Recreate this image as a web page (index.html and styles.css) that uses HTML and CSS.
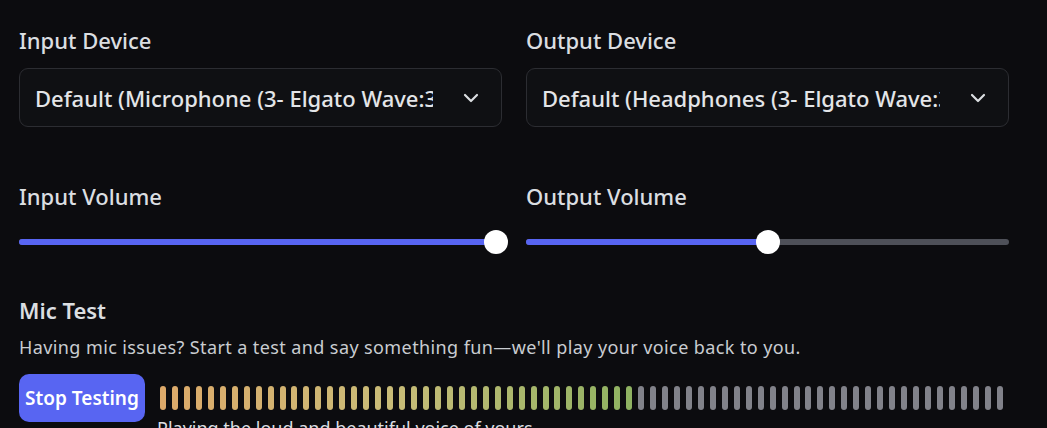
FILE: index.html
```html
<!DOCTYPE html>
<html lang="en">
<head>
    <meta charset="UTF-8">
    <title>Voice Settings</title>
    <link rel="stylesheet" href="styles.css">
</head>
<body>

<div class="settings">
    <div class="row">
        <div class="field">
            <h3 class="label">Input Device</h3>
            <div class="select">
                <span class="select-value">Default (Microphone (3- Elgato Wave:3))</span>
                <svg class="chevron" width="16" height="10" viewBox="0 0 16 10"><path d="M2 2l6 6 6-6" fill="none" stroke="#dbdee1" stroke-width="2.2" stroke-linecap="round" stroke-linejoin="round"/></svg>
            </div>
        </div>
        <div class="field">
            <h3 class="label">Output Device</h3>
            <div class="select">
                <span class="select-value">Default (Headphones (3- Elgato Wave:3))</span>
                <svg class="chevron" width="16" height="10" viewBox="0 0 16 10"><path d="M2 2l6 6 6-6" fill="none" stroke="#dbdee1" stroke-width="2.2" stroke-linecap="round" stroke-linejoin="round"/></svg>
            </div>
        </div>
    </div>

    <div class="row volumes">
        <div class="field">
            <h3 class="label">Input Volume</h3>
            <div class="slider">
                <div class="track"><div class="fill" style="width: 98.8%"></div></div>
                <div class="knob" style="left: 98.8%"></div>
            </div>
        </div>
        <div class="field">
            <h3 class="label">Output Volume</h3>
            <div class="slider">
                <div class="track"><div class="fill" style="width: 50.2%"></div></div>
                <div class="knob" style="left: 50.2%"></div>
            </div>
        </div>
    </div>

    <h3 class="label mic-title">Mic Test</h3>
    <p class="hint">Having mic issues? Start a test and say something fun—we'll play your voice back to you.</p>

    <div class="mic-test">
        <button class="btn">Stop Testing</button>
        <div class="meter">
            <div class="bars" id="bars"></div>
            <div class="meter-note">Playing the loud and beautiful voice of yours</div>
        </div>
    </div>
</div>

<script>
    // 71 bars, the first 40 lit, orange -> yellow -> green
    const bars = document.getElementById('bars');
    const total = 71;
    const lit = 40;
    const stops = [[221, 170, 106], [200, 188, 120], [143, 178, 98]];

    function mix(a, b, t) {
        return a.map((v, i) => Math.round(v + (b[i] - v) * t));
    }

    for (let i = 0; i < total; i++) {
        const bar = document.createElement('span');
        bar.className = 'bar';
        if (i < lit) {
            const t = i / (lit - 1);
            const c = t < 0.5 ? mix(stops[0], stops[1], t * 2) : mix(stops[1], stops[2], (t - 0.5) * 2);
            bar.style.background = `rgb(${c.join(',')})`;
        }
        bars.appendChild(bar);
    }
</script>

</body>
</html>
```

FILE: styles.css
```css
body {
    margin: 0;
    background: #0c0c0f;
    font-family: "Noto Sans", "Open Sans", sans-serif;
    color: #dbdee1;
    overflow: hidden;
}
.settings {
    width: 988px;
    padding: 26px 0 0 19px;
}
.row {
    display: grid;
    grid-template-columns: 483px 483px;
    column-gap: 24px;
}
.volumes {
    margin-top: 55px;
}
.label {
    margin: 0;
    font-size: 22px;
    line-height: 28px;
    font-weight: 500;
    color: #dbdee1;
}
.select {
    margin-top: 14px;
    height: 57px;
    box-sizing: content-box;
    border: 1px solid #2c2d32;
    border-radius: 9px;
    background: #0f1013;
    display: flex;
    align-items: center;
    padding: 0 22px 0 15px;
}
.select-value {
    flex: 1;
    min-width: 0;
    overflow: hidden;
    white-space: nowrap;
    font-size: 22px;
    font-weight: 500;
    color: #e3e5e8;
    margin-right: 30px;
}
.chevron {
    flex: none;
}
.slider {
    position: relative;
    margin-top: 20px;
    height: 24px;
    display: flex;
    align-items: center;
}
.track {
    width: 100%;
    height: 6px;
    border-radius: 3px;
    background: #4e5058;
    overflow: hidden;
}
.fill {
    height: 100%;
    background: #5865f2;
}
.knob {
    position: absolute;
    top: 0;
    width: 24px;
    height: 24px;
    margin-left: -12px;
    border-radius: 50%;
    background: #fff;
}
.mic-title {
    margin-top: 42px;
    font-weight: 600;
}
.hint {
    margin: 12px 0 0;
    font-size: 18px;
    line-height: 22px;
    letter-spacing: 0.4px;
    color: #c9ccd1;
}
.mic-test {
    display: flex;
    margin-top: 16px;
    gap: 15px;
}
.btn {
    flex: none;
    width: 126px;
    height: 48px;
    padding: 0;
    border: none;
    border-radius: 10px;
    background: #5865f2;
    color: #fff;
    font-family: inherit;
    font-size: 19px;
    font-weight: 600;
}
.meter {
    padding-top: 12px;
    width: 843px;
}
.bars {
    display: flex;
    justify-content: space-between;
}
.bar {
    width: 6px;
    height: 24px;
    border-radius: 3px;
    background: #81828a;
}
.meter-note {
    margin: 8px 0 0 -3px;
    font-size: 18px;
    line-height: 20px;
    color: #dbdee1;
    white-space: nowrap;
}
```
